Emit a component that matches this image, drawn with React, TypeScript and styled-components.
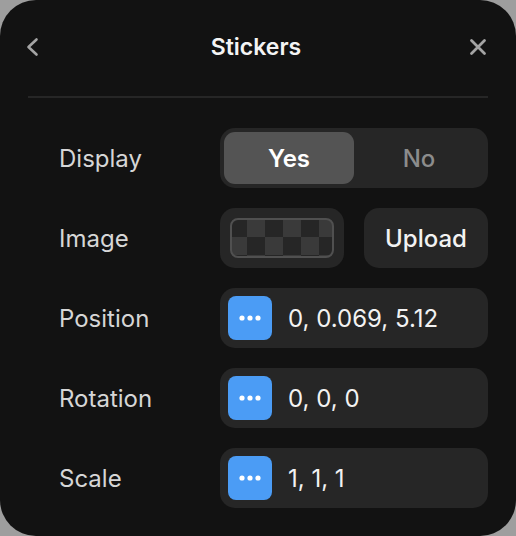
import React, { FC } from 'react';
import styled, { createGlobalStyle } from 'styled-components';

const GlobalStyle = createGlobalStyle`
  html, body {
    margin: 0;
    padding: 0;
    background: #9e9e9e;
  }
  body {
    font-family: Inter, "Noto Sans", "Liberation Sans", sans-serif;
    -webkit-font-smoothing: antialiased;
  }
`;

const Panel = styled.div`
  width: 516px;
  height: 536px;
  box-sizing: border-box;
  background: #121212;
  border-radius: 36px;
  overflow: hidden;
  display: flex;
  flex-direction: column;
  padding: 0 28px;
`;

const Header = styled.div`
  height: 98px;
  display: flex;
  align-items: center;
  justify-content: space-between;
  padding-bottom: 2px;
  box-sizing: border-box;
  border-bottom: 2px solid #262626;
`;

const IconButton = styled.button<{ $shift?: number }>`
  width: 24px;
  height: 24px;
  padding: 0;
  border: none;
  background: none;
  color: #a4a4a4;
  display: flex;
  align-items: center;
  justify-content: center;
  cursor: pointer;
  margin: 0 ${({ $shift }) => ($shift && $shift < 0 ? `${$shift}px` : '0')} 0
    ${({ $shift }) => ($shift && $shift > 0 ? `-${$shift}px` : '0')};
`;

const Title = styled.h1`
  margin: 0;
  font-size: 23px;
  font-weight: 600;
  color: #f4f4f4;
`;

const Rows = styled.div`
  display: flex;
  flex-direction: column;
  gap: 20px;
  padding-top: 30px;
`;

const Row = styled.div`
  display: grid;
  grid-template-columns: 192px 268px;
  align-items: center;
  height: 60px;
`;

const Label = styled.span`
  padding-left: 31px;
  font-size: 24px;
  color: #d6d6d6;
`;

const Segmented = styled.div`
  height: 60px;
  box-sizing: border-box;
  padding: 4px;
  background: #262626;
  border-radius: 15px;
  display: flex;
`;

const Segment = styled.button<{ $active?: boolean }>`
  flex: 1;
  border: none;
  border-radius: 11px;
  background: ${({ $active }) => ($active ? '#545454' : 'transparent')};
  color: ${({ $active }) => ($active ? '#ffffff' : '#8c8c8c')};
  font-family: inherit;
  font-size: 24px;
  font-weight: ${({ $active }) => ($active ? 600 : 500)};
  cursor: pointer;
`;

const Pair = styled.div`
  display: flex;
  gap: 20px;
  height: 60px;
`;

const Swatch = styled.div`
  width: 124px;
  flex: none;
  box-sizing: border-box;
  background: #262626;
  border-radius: 15px;
  padding: 10px;
  display: flex;
`;

const Checker = styled.div`
  flex: 1;
  box-sizing: border-box;
  border: 2px solid #505050;
  border-radius: 8px;
  background: repeating-conic-gradient(#3a3a3a 0 25%, #262626 0 50%);
  background-size: 36px 36px;
  background-position: -3px -1px;
`;

const Button = styled.button`
  width: 124px;
  flex: none;
  border: none;
  border-radius: 15px;
  background: #262626;
  color: #f2f2f2;
  font-family: inherit;
  font-size: 24px;
  font-weight: 500;
  cursor: pointer;
`;

const Field = styled.div`
  height: 60px;
  box-sizing: border-box;
  background: #262626;
  border-radius: 15px;
  padding: 8px;
  display: flex;
  align-items: center;
  gap: 16px;
`;

const MoreButton = styled.button`
  width: 44px;
  height: 44px;
  flex: none;
  border: none;
  border-radius: 8px;
  background: #4b9cf5;
  display: flex;
  align-items: center;
  justify-content: center;
  padding: 0;
  cursor: pointer;
`;

const Value = styled.span`
  font-size: 24px;
  color: #f2f2f2;
`;

const Dots = () => (
  <svg width="22" height="6" viewBox="0 0 22 6">
    <circle cx="3" cy="3" r="2.6" fill="#fff" />
    <circle cx="11" cy="3" r="2.6" fill="#fff" />
    <circle cx="19" cy="3" r="2.6" fill="#fff" />
  </svg>
);

interface VectorRowProps {
  label: string;
  value: string;
}

const VectorRow: FC<VectorRowProps> = ({ label, value }) => (
  <Row>
    <Label>{label}</Label>
    <Field>
      <MoreButton>
        <Dots />
      </MoreButton>
      <Value>{value}</Value>
    </Field>
  </Row>
);

const App: FC = () => (
  <>
    <GlobalStyle />
    <Panel>
      <Header>
        <IconButton aria-label="Back" $shift={6}>
          <svg width="24" height="24" viewBox="0 0 24 24" fill="none" stroke="currentColor" strokeWidth="2.6" strokeLinecap="round" strokeLinejoin="round">
            <path d="M14.5 4.5 L6.5 12 L14.5 19.5" />
          </svg>
        </IconButton>
        <Title>Stickers</Title>
        <IconButton aria-label="Close" $shift={-2}>
          <svg width="24" height="24" viewBox="0 0 24 24" fill="none" stroke="currentColor" strokeWidth="2.8" strokeLinecap="round">
            <path d="M5.5 5.5 L18.5 18.5 M18.5 5.5 L5.5 18.5" />
          </svg>
        </IconButton>
      </Header>
      <Rows>
        <Row>
          <Label>Display</Label>
          <Segmented>
            <Segment $active>Yes</Segment>
            <Segment>No</Segment>
          </Segmented>
        </Row>
        <Row>
          <Label>Image</Label>
          <Pair>
            <Swatch>
              <Checker />
            </Swatch>
            <Button>Upload</Button>
          </Pair>
        </Row>
        <VectorRow label="Position" value="0, 0.069, 5.12" />
        <VectorRow label="Rotation" value="0, 0, 0" />
        <VectorRow label="Scale" value="1, 1, 1" />
      </Rows>
    </Panel>
  </>
);

export default App;
